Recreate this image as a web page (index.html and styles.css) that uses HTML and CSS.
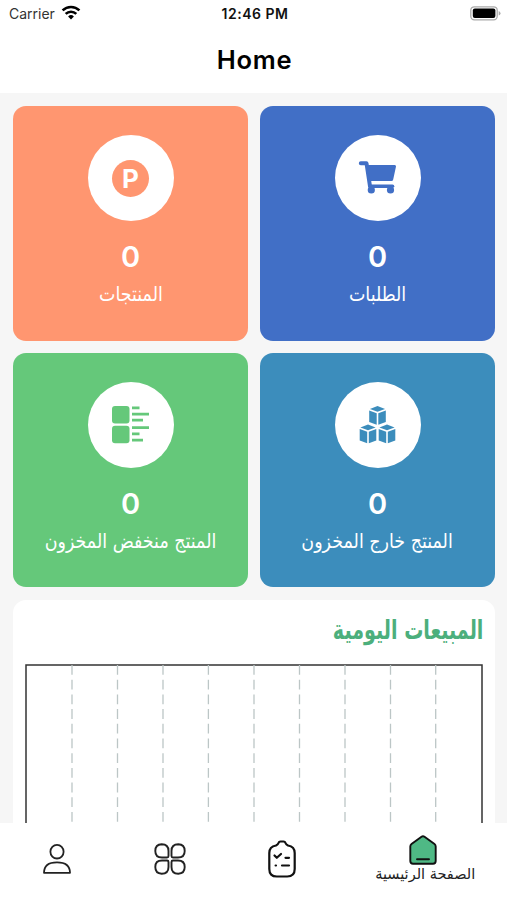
FILE: index.html
```html
<!DOCTYPE html>
<html lang="en">
<head>
  <meta charset="UTF-8" />
  <meta name="viewport" content="width=device-width, initial-scale=1.0"/>
  <title>Home</title>
  <link rel="stylesheet" href="styles.css">
</head>
<body>
  <div class="app">
    <div class="status-bar">
      <div class="carrier">
        <span>Carrier</span>
        <svg width="20" height="15" viewBox="0 0 20 15">
          <g fill="none" stroke="#000" stroke-width="2.6">
            <path d="M1.6 5.4a12 12 0 0 1 16.8 0"/>
            <path d="M4.7 8.9a7.6 7.6 0 0 1 10.6 0"/>
          </g>
          <path d="M10 14.4l-2.9-3a4.2 4.2 0 0 1 5.8 0z"/>
        </svg>
      </div>
      <div class="time">12:46 PM</div>
      <svg class="battery" width="31" height="15" viewBox="0 0 31 15">
        <rect x=".8" y=".8" width="26.4" height="13" rx="3.5" fill="#fff" stroke="#aaa" stroke-width="1.3"/>
        <rect x="2.8" y="2.6" width="22.6" height="9.4" rx="2" fill="#000"/>
        <path d="M28.7 5v4.6q1.8-.7 1.8-2.3T28.7 5z" fill="#aaa"/>
      </svg>
    </div>

    <h1 class="title">Home</h1>

    <main class="content">
      <div class="cards" dir="rtl">
        <div class="card orders">
          <div class="icon">
            <svg width="40" height="38" viewBox="0 0 40 38">
              <path d="M2.800 4.300H8.500l3.500 23" fill="none" stroke="#416fc6" stroke-width="4" stroke-linejoin="round" stroke-linecap="round"/>
              <path d="M9 6H36.700q1.500 0 1.300 1.500l-2.800 13q-.3 1.500-1.800 1.500H12z" fill="#416fc6"/>
              <path d="M12 27.300h22.500" stroke="#416fc6" stroke-width="3.600" stroke-linecap="round"/>
              <circle cx="13.300" cy="31" r="3.600" fill="#416fc6"/>
              <circle cx="32.500" cy="31" r="3.600" fill="#416fc6"/>
            </svg>
          </div>
          <div class="count">0</div>
          <div class="label"><span>الطلبات</span></div>
        </div>

        <div class="card products">
          <div class="icon"><div class="p-badge">P</div></div>
          <div class="count">0</div>
          <div class="label"><span>المنتجات</span></div>
        </div>

        <div class="card out-stock">
          <div class="icon">
            <svg width="38" height="38" viewBox="0 0 38 38">
              <defs>
                <g id="box" fill="#3c8dbc">
                  <path d="M9 0l7.600 2.900L9 5.800 1.400 2.900z"/>
                  <path d="M.7 4.400l7.500 2.900v11.400L.7 15.900z"/>
                  <path d="M17.300 4.400L9.800 7.300v11.400l7.500-2.800z"/>
                </g>
              </defs>
              <use href="#box" x="9.500"/>
              <use href="#box" x="0" y="18.500"/>
              <use href="#box" x="19" y="18.500"/>
            </svg>
          </div>
          <div class="count">0</div>
          <div class="label"><span>المنتج خارج المخزون</span></div>
        </div>

        <div class="card low-stock">
          <div class="icon">
            <svg width="38" height="38" viewBox="0 0 38 38" fill="#65c87a">
              <rect x="0" y="0" width="17.500" height="17.500" rx="3"/>
              <rect x="0" y="19.800" width="17.500" height="17.500" rx="3"/>
              <path d="M20 .5h7.500v2.800h-7.500zM20 6.700h17v2.800h-17zM20 12.800h11v2.800h-11zM20 20.300h17v2.800h-17zM20 26.500h7.500v2.800h-7.500zM20 32.700h11v2.800h-11z"/>
            </svg>
          </div>
          <div class="count">0</div>
          <div class="label"><span>المنتج منخفض المخزون</span></div>
        </div>
      </div>

      <section class="sales">
        <h2 dir="rtl"><span>المبيعات اليومية</span></h2>
        <svg class="chart" width="458" height="300" viewBox="0 0 458 300">
          <rect x="1" y="1" width="456" height="320" fill="none" stroke="#333" stroke-width="1.500"/>
          <path class="grid-lines" d="M47 1v299M92.500 1v299M138 1v299M183.400 1v299M229 1v299M274.500 1v299M320 1v299M365.500 1v299M410.700 1v299"/>
        </svg>
      </section>
    </main>

    <nav class="tabs" dir="rtl">
      <a class="tab active">
        <svg width="28" height="30" viewBox="0 0 28 30">
          <path d="M12.500 1.700q1.500-1 3 0l10 7.300q1.200.9 1.200 2.500V26q0 2.700-2.700 2.700H4Q1.300 28.700 1.300 26V11.500q0-1.600 1.200-2.500z" fill="#4fb985" stroke="#111" stroke-width="1.900"/>
          <path d="M8 24.300h12" stroke="#111" stroke-width="1.900" stroke-linecap="round"/>
        </svg>
        <span>الصفحة الرئيسية</span>
      </a>
      <a class="tab">
        <svg width="28" height="38" viewBox="0 0 28 38" fill="none" stroke="#111" stroke-width="2.200" stroke-linecap="round" stroke-linejoin="round">
          <path d="M8 5.500Q10 4.500 10.500 3 11 1.500 12.500 1.500h3q1.500 0 2 1.500t2.500 2.500q6.700 1 6.700 7.500v16q0 7.500-7.500 7.500H8.800q-7.500 0-7.500-7.500V13q0-6.500 6.700-7.500z"/>
          <path d="M6.500 15.500l2.300 2.300 4.200-3.800M17.500 17.800h3.500M7.600 25.500h.4M14 25.500h7"/>
        </svg>
      </a>
      <a class="tab">
        <svg width="32" height="32" viewBox="0 0 32 32" fill="none" stroke="#222" stroke-width="1.900">
          <path d="M7.700 1.300q6.800 0 6.800 6.700v5q0 1.500-1.500 1.500H8Q1.300 14.500 1.300 8t6.400-6.700z"/>
          <path d="M24.300 1.300q-6.800 0-6.800 6.700v5q0 1.500 1.500 1.500h5q6.700 0 6.700-6.500t-6.400-6.700z"/>
          <path d="M7.700 30.700q6.800 0 6.800-6.700v-5q0-1.500-1.500-1.500H8q-6.700 0-6.700 6.500t6.400 6.700z"/>
          <path d="M24.300 30.700q-6.800 0-6.800-6.700v-5q0-1.500 1.500-1.500h5q6.700 0 6.700 6.500t-6.400 6.700z"/>
        </svg>
      </a>
      <a class="tab">
        <svg width="28" height="30" viewBox="0 0 28 30" fill="none" stroke="#222" stroke-width="1.800" stroke-linejoin="round">
          <ellipse cx="14" cy="7.700" rx="6.600" ry="6.800"/>
          <path d="M1 28.800q0-10.500 13-10.500t13 10.500z"/>
        </svg>
      </a>
    </nav>
  </div>
</body>
</html>
```
FILE: styles.css
```css
* {
  box-sizing: border-box;
}

body {
  margin: 0;
  background: #fff;
  font-family: Inter, "DejaVu Sans", sans-serif;
}

.app {
  height: 900px;
  display: flex;
  flex-direction: column;
  overflow: hidden;
}

.status-bar {
  height: 28px;
  padding: 0 6px 0 9px;
  display: grid;
  grid-template-columns: 1fr auto 1fr;
  align-items: center;
  font-size: 14px;
  color: #111;
  flex-shrink: 0;
}

.carrier {
  display: flex;
  align-items: center;
  gap: 6px;
  color: #333;
}

.carrier span {
  margin-top: -1px;
}

.carrier svg {
  margin-top: -3px;
}

.time {
  font-weight: 600;
  letter-spacing: 0.5px;
  line-height: 28px;
}

.battery {
  justify-self: end;
  margin-top: -2px;
}

.title {
  height: 65px;
  margin: 0;
  line-height: 64px;
  text-align: center;
  font-size: 25.5px;
  font-weight: 600;
  letter-spacing: 0.7px;
  padding-left: 2px;
  flex-shrink: 0;
}

.content {
  flex: 1;
  min-height: 0;
  overflow: hidden;
  padding: 13px 12px 0 13px;
  background: #f6f6f6;
}

.cards {
  display: grid;
  grid-template-columns: 1fr 1fr;
  gap: 12px;
}

.card {
  height: 234.5px;
  border-radius: 13px;
  padding-top: 29px;
  display: flex;
  flex-direction: column;
  align-items: center;
  color: #fff;
}

.orders { background: #416fc6; }
.products { background: #ff9670; }
.out-stock { background: #3c8dbc; }
.low-stock { background: #65c87a; }

.icon {
  width: 86px;
  height: 86px;
  border-radius: 50%;
  background: #fff;
  display: flex;
  align-items: center;
  justify-content: center;
}

.p-badge {
  width: 37px;
  height: 37px;
  border-radius: 50%;
  background: #ff9670;
  font-family: Inter, sans-serif;
  font-size: 26px;
  font-weight: 700;
  line-height: 37px;
  text-align: center;
}

.count {
  margin-top: 18px;
  font-family: Inter, sans-serif;
  font-size: 29px;
  font-weight: 600;
  line-height: 36px;
}

.label {
  font-family: "DejaVu Sans", sans-serif;
  font-size: 18px;
  line-height: 38px;
  white-space: nowrap;
}

/* taller, narrower arabic letters */
.label span {
  display: inline-block;
  transform: scale(0.97, 1.12);
}

.sales {
  height: 320px;
  margin-top: 13px;
  padding: 0 12px;
  border-radius: 13px;
  background: #fff;
}

.sales h2 {
  height: 64px;
  margin: 0;
  line-height: 61px;
  font-family: "DejaVu Sans", sans-serif;
  font-size: 23px;
  color: #4caf7c;
}

.sales h2 span {
  display: inline-block;
  transform: scale(0.83, 1.15);
  transform-origin: right center;
}

.chart {
  display: block;
}

.grid-lines {
  stroke: #bcc6c6;
  stroke-width: 1.3;
  stroke-dasharray: 9.8 4.9;
}

.tabs {
  height: 77px;
  padding-left: 1px;
  display: grid;
  grid-template-columns: 1.5fr 1fr 1fr 1fr;
  background: #fff;
  flex-shrink: 0;
}

.tab {
  height: 71px;
  display: flex;
  flex-direction: column;
  align-items: center;
  justify-content: center;
}

.tab span {
  font-family: "DejaVu Sans", sans-serif;
  font-size: 14.5px;
  line-height: 18px;
  color: #222;
  white-space: nowrap;
  margin-right: -5px;
}

.active {
  padding-top: 1px;
}
```
